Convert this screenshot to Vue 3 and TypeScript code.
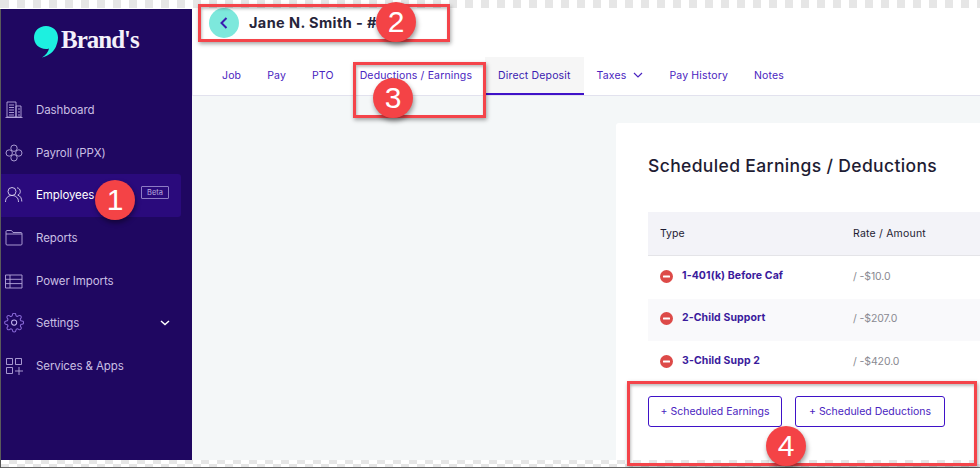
<script setup lang="ts">
const nav = [
  { label: 'Dashboard', icon: 'dash' },
  { label: 'Payroll (PPX)', icon: 'payroll' },
  { label: 'Employees', icon: 'people', active: true },
  { label: 'Reports', icon: 'folder' },
  { label: 'Power Imports', icon: 'table' },
  { label: 'Settings', icon: 'gear', caret: true },
  { label: 'Services & Apps', icon: 'apps' },
]
const tabs = [
  { label: 'Job' },
  { label: 'Pay' },
  { label: 'PTO' },
  { label: 'Deductions / Earnings' },
  { label: 'Direct Deposit', active: true },
  { label: 'Taxes', caret: true },
  { label: 'Pay History' },
  { label: 'Notes' },
]
const rows = [
  { type: '1-401(k) Before Caf', amount: '/ -$10.0' },
  { type: '2-Child Support', amount: '/ -$207.0' },
  { type: '3-Child Supp 2', amount: '/ -$420.0' },
]
</script>

<template>
  <div class="page">
    <div class="checks top"></div>
    <div class="body">
      <aside class="side">
        <div class="logo">
          <svg width="26" height="34" viewBox="0 0 26 34">
            <path d="M13 1C6 1 1 6 1 12.500 1 19 6 24 13 24c1 0 2 0 3-.5-.5 3-3 6.500-7 9 7-2 12-6 14-11 1-3 2-5.500 2-9C25 6 20 1 13 1z" fill="#1DF0E0" />
          </svg>
          <span class="brand">Brand's</span>
        </div>
        <nav class="nav">
          <div v-for="n in nav" :key="n.label" class="nav-item" :class="{ active: n.active }">
            <svg class="nav-icon" width="20" height="20" viewBox="0 0 20 20" fill="none" stroke="currentColor" stroke-width="0.9">
              <template v-if="n.icon === 'dash'">
                <path d="M3 2h9v15H3zM12 6h5v11h-5zM1.500 17.500h17" />
                <path d="M5 5h5M5 7.500h5M5 10h5M5 12.500h5M5 15h5M14 9h2M14 12h2M14 15h2" />
              </template>
              <template v-else-if="n.icon === 'payroll'">
                <circle cx="10" cy="5.200" r="3.200" />
                <circle cx="10" cy="14.800" r="3.200" />
                <circle cx="5.200" cy="10" r="3.200" />
                <circle cx="14.800" cy="10" r="3.200" />
              </template>
              <template v-else-if="n.icon === 'people'">
                <circle cx="8" cy="6.500" r="4" />
                <path d="M1.500 17c0-4 2.500-6.500 6.500-6.500s6.500 2.500 6.500 6.500M13 2.800c2 .2 3.300 1.800 3.300 3.700 0 1.700-1 3-2.500 3.600 2.500.8 4 3.200 4 6.400" />
              </template>
              <template v-else-if="n.icon === 'folder'">
                <path d="M2 16V3.500C2 3 2.500 2.500 3 2.500h4.500l1.500 2h8c.6 0 1 .4 1 1V16c0 .6-.4 1-1 1H3c-.6 0-1-.4-1-1zM2 6h16" />
              </template>
              <template v-else-if="n.icon === 'table'">
                <path d="M1.500 4h16.500v13H1.500zM1.500 8.300H18M1.500 12.600H18M6 4v13" />
              </template>
              <template v-else-if="n.icon === 'gear'">
                <g stroke="#8a6ad8" stroke-width="1.200" transform="translate(-0.200 -0.700) scale(0.860)">
                  <circle cx="12" cy="12" r="3" stroke="#c3b4ee" />
                  <path d="M19.400 15a1.650 1.650 0 0 0 .33 1.820l.06.06a2 2 0 0 1 0 2.830 2 2 0 0 1-2.830 0l-.06-.06a1.650 1.650 0 0 0-1.820-.33 1.650 1.650 0 0 0-1 1.510V21a2 2 0 0 1-2 2 2 2 0 0 1-2-2v-.09A1.650 1.650 0 0 0 9 19.400a1.650 1.650 0 0 0-1.820.33l-.06.06a2 2 0 0 1-2.830 0 2 2 0 0 1 0-2.830l.06-.06a1.650 1.650 0 0 0 .33-1.820 1.650 1.650 0 0 0-1.510-1H3a2 2 0 0 1-2-2 2 2 0 0 1 2-2h.09A1.650 1.650 0 0 0 4.600 9a1.650 1.650 0 0 0-.33-1.820l-.06-.06a2 2 0 0 1 0-2.830 2 2 0 0 1 2.830 0l.06.06a1.650 1.650 0 0 0 1.820.33H9a1.650 1.650 0 0 0 1-1.510V3a2 2 0 0 1 2-2 2 2 0 0 1 2 2v.09a1.650 1.650 0 0 0 1 1.510 1.650 1.650 0 0 0 1.820-.33l.06-.06a2 2 0 0 1 2.830 0 2 2 0 0 1 0 2.830l-.06.06a1.650 1.650 0 0 0-.33 1.820V9a1.650 1.650 0 0 0 1.510 1H21a2 2 0 0 1 2 2 2 2 0 0 1-2 2h-.09a1.650 1.650 0 0 0-1.510 1z" />
                </g>
              </template>
              <template v-else>
                <path d="M2.500 2.500h6v6h-6zM11.500 2.500h6v6h-6zM2.500 11.500h6v6h-6zM15 11v8M11 15h8" />
              </template>
            </svg>
            <span class="nav-label">{{ n.label }}</span>
            <span v-if="n.active" class="beta">Beta</span>
            <svg v-if="n.caret" class="nav-caret" width="10" height="6" viewBox="0 0 10 6" fill="none" stroke="#fff" stroke-width="1.500">
              <path d="M1 1l4 3.500L9 1" />
            </svg>
          </div>
        </nav>
      </aside>

      <main class="main">
        <header class="head">
          <span class="back">
            <svg width="10" height="14" viewBox="0 0 10 14" fill="none" stroke="#3a1bb0" stroke-width="2">
              <path d="M7.500 2L2.500 7l5 5" />
            </svg>
          </span>
          <h1 class="name">Jane N. Smith - #</h1>
        </header>
        <div class="tabs">
          <div v-for="t in tabs" :key="t.label" class="tab" :class="{ on: t.active }">
            {{ t.label }}
            <svg v-if="t.caret" class="tab-caret" width="10" height="6" viewBox="0 0 10 6" fill="none" stroke="#4a24c0" stroke-width="1.200">
              <path d="M1 1l4 4 4-4" />
            </svg>
          </div>
        </div>
        <div class="content">
          <section class="card">
            <h2 class="title">Scheduled Earnings / Deductions</h2>
            <div class="thead">
              <span class="c1">Type</span>
              <span class="rate">Rate / Amount</span>
            </div>
            <div v-for="r in rows" :key="r.type" class="row">
              <span class="c1 type">
                <svg class="minus" width="13" height="13" viewBox="0 0 13 13">
                  <circle cx="6.500" cy="6.500" r="6.500" fill="#dd4a48" />
                  <rect x="3" y="5.500" width="7" height="2" rx="0.500" fill="#fff" />
                </svg>
                {{ r.type }}
              </span>
              <span class="amount">{{ r.amount }}</span>
            </div>
            <div class="actions">
              <button class="btn b1">+ Scheduled Earnings</button>
              <button class="btn b2">+ Scheduled Deductions</button>
            </div>
          </section>
        </div>
      </main>
    </div>
    <div class="checks bottom"><i></i><i></i></div>

    <div class="box box2"></div>
    <div class="box box3"></div>
    <div class="box box4"></div>
    <div class="num n1">1</div>
    <div class="num n2">2</div>
    <div class="num n3">3</div>
    <div class="num n4">4</div>
  </div>
</template>

<style>
html, body { margin: 0; background: #fff; }
</style>

<style scoped>
.page {
  position: relative;
  width: 980px;
  height: 468px;
  overflow: hidden;
  display: flex;
  flex-direction: column;
  background: #fff;
  font-family: "Inter", "Noto Sans", sans-serif;
}
.checks.top {
  height: 8px;
  margin-bottom: 1px;
  background: repeating-linear-gradient(90deg, #e6e6e6 0 8px, #fff 8px 16px) 1px 0;
}
.checks.bottom {
  height: 8px;
  display: flex;
  flex-direction: column;
  border-left: 1px solid #555;
  box-sizing: border-box;
}
.checks.bottom i { display: block; height: 4px; }
.checks.bottom i:first-child {
  background: repeating-linear-gradient(90deg, #fff 0 8px, #e6e6e6 8px 16px);
}
.checks.bottom i:last-child {
  height: 4px;
  box-sizing: border-box;
  background: repeating-linear-gradient(90deg, #e6e6e6 0 8px, #fff 8px 16px);
  border-bottom: 1px solid #666;
}
.body { flex: 1; display: flex; min-height: 0; }

.side {
  width: 191px;
  flex: none;
  background: #1f0761;
  border-left: 1px solid #5a5a5a;
  display: flex;
  flex-direction: column;
}
.logo {
  height: 70px;
  display: flex;
  align-items: flex-start;
  padding: 16px 0 0 32px;
  box-sizing: border-box;
  gap: 2px;
}
.brand {
  font-family: "Liberation Serif", serif;
  font-weight: 700;
  font-size: 25px;
  line-height: 29px;
  color: #f4f0fa;
  letter-spacing: -1px;
}
.nav { padding-top: 9.500px; display: flex; flex-direction: column; }
.nav-item {
  height: 42.700px;
  width: 180px;
  display: flex;
  align-items: center;
  padding-left: 3px;
  box-sizing: border-box;
  color: #c9bfe3;
  font-size: 11.500px;
  border-radius: 0 3px 3px 0;
}
.nav-item.active { background: #2a0a7c; color: #fff; }
.nav-icon { flex: none; color: #b7a9dd; }
.nav-item.active .nav-icon { color: #dcd5f2; }
.nav-label { margin-left: 12px; letter-spacing: -0.1px; }
.beta {
  margin: 0 12px 6px auto;
  width: 26px;
  height: 11px;
  border: 1px solid #8d7bc4;
  border-radius: 1px;
  font-size: 7.500px;
  line-height: 11px;
  text-align: center;
  color: #b7a9dd;
}
.nav-caret { margin-left: auto; margin-right: 11px; }

.main { flex: 1; min-width: 0; display: flex; flex-direction: column; }
.head {
  height: 41px;
  display: flex;
  align-items: center;
  padding: 0 0 12px 17px;
  gap: 10px;
  box-sizing: border-box;
  margin-top: -1px;
}
.back {
  width: 30px;
  height: 30px;
  flex: none;
  border-radius: 50%;
  background: #7de8dc;
  display: flex;
  align-items: center;
  justify-content: center;
}
.name {
  margin: 0;
  font-size: 14.500px;
  font-weight: 700;
  color: #26243a;
  letter-spacing: 0.4px;
}
.tabs {
  height: 46px;
  padding-left: 16px;
  display: flex;
  align-items: stretch;
  border-left: 1px solid #e8e8f0;
  border-bottom: 1px solid #e2e2ee;
  box-sizing: border-box;
  margin-top: 1px;
}
.tab {
  padding: 8px 13px 0;
  margin-top: 7px;
  font-size: 10.500px;
  line-height: 22px;
  height: 38px;
  box-sizing: border-box;
  color: #4a24c0;
  white-space: nowrap;
  letter-spacing: 0.15px;
}
.tab.on {
  background: #f6f6f6;
  border-bottom: 2px solid #3f12c8;
  color: #3a1bb0;
}
.tab-caret { margin-left: 4px; vertical-align: 1px; }

.content {
  flex: 1;
  min-height: 0;
  background: #f4f7f8;
  padding: 27px 0 0 424px;
  display: flex;
}
.card {
  flex: 1;
  min-width: 0;
  background: #fff;
  border-radius: 3px 0 0 0;
  padding: 32px 0 0 32px;
  overflow: hidden;
}
.title {
  margin: 0 0 35px;
  font-size: 17.500px;
  line-height: 22px;
  font-weight: 500;
  color: #1e1c33;
  letter-spacing: 0.36px;
  white-space: nowrap;
}
.thead, .row {
  display: flex;
  align-items: center;
  font-size: 10.500px;
}
.thead {
  height: 44px;
  background: #f3f3f8;
  border-bottom: 1px solid #e4e4e8;
  box-sizing: border-box;
  color: #1e1c33;
}
.rate { letter-spacing: 0.2px; }
.c1 {
  width: 205px;
  padding-left: 12px;
  box-sizing: border-box;
  flex: none;
}
.row { height: 42.500px; }
.row:nth-of-type(odd) { background: #f9f9fb; }
.type {
  display: flex;
  align-items: center;
  gap: 9px;
  margin-bottom: 4px;
  font-weight: 700;
  color: #3a1a9c;
  letter-spacing: 0.1px;
  white-space: nowrap;
}
.minus { flex: none; margin-top: 2px; }
.amount { color: #8a8a92; font-size: 10.500px; margin-bottom: 2px; letter-spacing: -0.1px; }
.actions {
  display: flex;
  gap: 13px;
  padding-top: 12px;
}
.btn {
  height: 31px;
  background: #fff;
  border: 1px solid #3f12c8;
  border-radius: 3px;
  color: #4a24c0;
  font: inherit;
  font-size: 10.500px;
  padding: 0;
  box-sizing: border-box;
}
.b1 { width: 134px; }
.b2 { width: 150px; }

.box {
  position: absolute;
  border: 3px solid #f4444a;
  box-sizing: border-box;
  box-shadow: 1px 2px 4px rgba(0, 0, 0, 0.35), inset 1px 2px 3px rgba(0, 0, 0, 0.25);
}
.box2 { left: 198px; top: 4px; width: 252px; height: 38px; }
.box3 { left: 353px; top: 62px; width: 133px; height: 56px; }
.box4 { left: 627px; top: 381px; width: 350px; height: 85px; }
.num {
  position: absolute;
  width: 40px;
  height: 40px;
  border-radius: 50%;
  background: #f44346;
  color: #fff;
  font-family: "Liberation Sans", sans-serif;
  font-size: 30px;
  line-height: 40px;
  text-align: center;
  box-shadow: 1px 3px 5px rgba(0, 0, 0, 0.4);
}
.n1 { left: 95px; top: 180px; }
.n2 { left: 376px; top: 2px; }
.n3 { left: 373px; top: 78px; }
.n4 { left: 766px; top: 426px; }
</style>
